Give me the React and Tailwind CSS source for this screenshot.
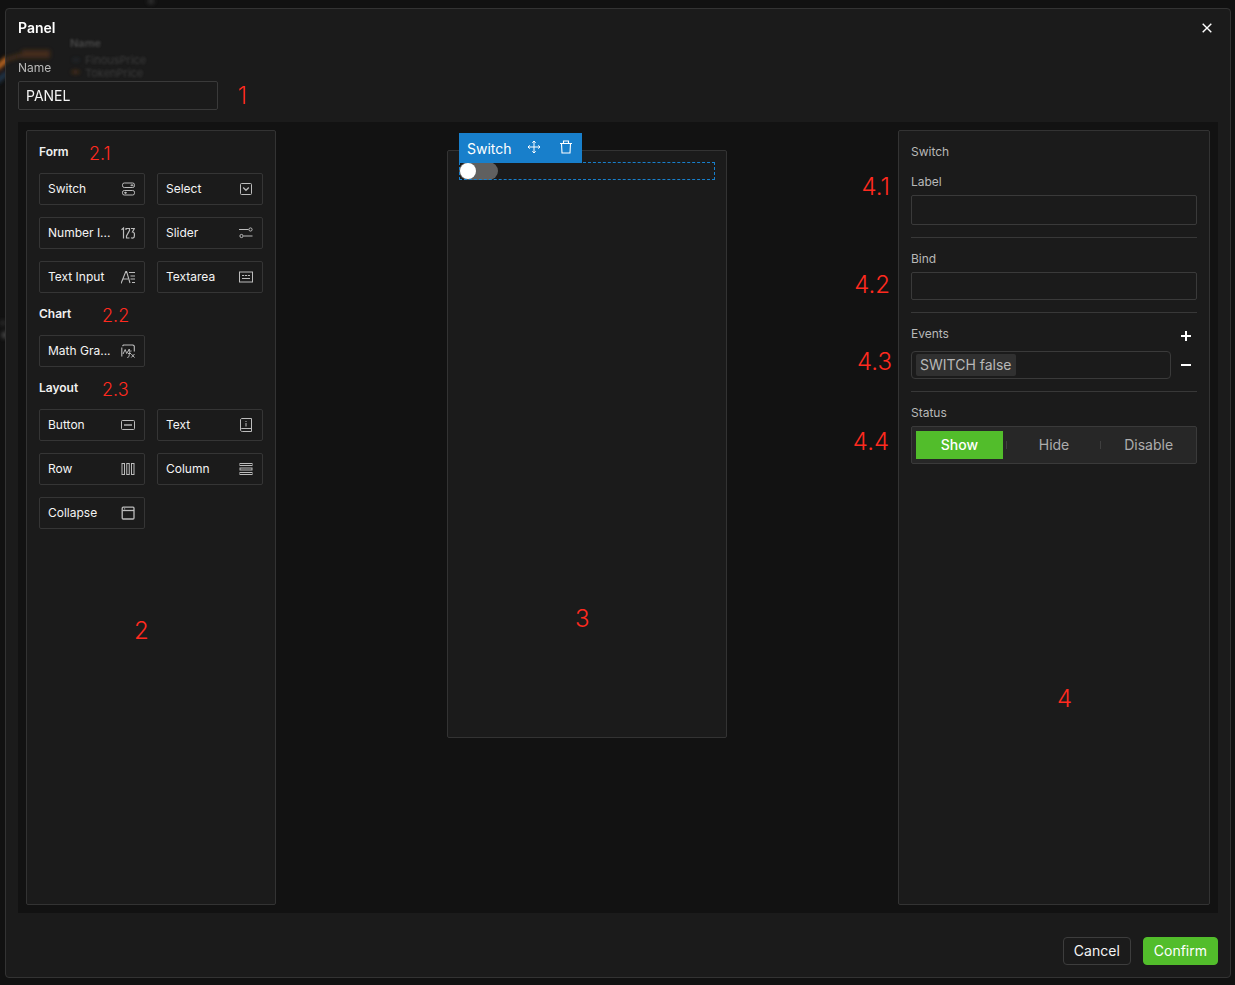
import { useState } from "react";

const stroke = {
  fill: "none",
  stroke: "currentColor",
  strokeWidth: 1,
};

function Icon({ children }) {
  return (
    <svg
      viewBox="0 0 14 14"
      className="h-3.5 w-3.5 shrink-0 text-[#bcbcbc]"
      aria-hidden="true"
      {...stroke}
    >
      {children}
    </svg>
  );
}

const icons = {
  switch: (
    <Icon>
      <rect x="1.500" y="1" width="12" height="4.500" rx="1.800" />
      <rect x="1.500" y="8.500" width="12" height="4.500" rx="1.800" />
      <path d="M9.500 3.250h3M11 2.250v2M3 10.750h3M4.500 9.750v2" />
    </Icon>
  ),
  select: (
    <Icon>
      <rect x="1.500" y="1.500" width="11" height="11" rx="1" />
      <path d="M4.200 5.500 7 8.300l2.800-2.800" strokeWidth="1.300" />
    </Icon>
  ),
  number: (
    <Icon>
      <path
        d="M.500 3.800 2.500 2v10.500M5 4V2.500h3.500v2L5.500 10v2h3M10 2.500h3.300L11.500 6c2.300 0 2 2.500 1.800 4.500 0 1.500-1.800 1.900-3.300 1.200"
        strokeWidth="1.200"
      />
    </Icon>
  ),
  slider: (
    <Icon>
      <path d="M0 3.500h9.500M4.500 10h9" />
      <circle cx="11.500" cy="3.500" r="1.600" />
      <circle cx="2.500" cy="10" r="1.600" />
    </Icon>
  ),
  textInput: (
    <Icon>
      <path d="M0 13.500 4.800 1.500h.8L9 13M2 9h5M8 2.500h6.500M9.500 6h4.500M9.500 9h4.500M11 12.500h3.500" strokeWidth="1.100" />
    </Icon>
  ),
  textarea: (
    <Icon>
      <rect x="0.500" y="2" width="13" height="10" />
      <path d="M3 5.500h2.200M6 5.500h2.200M9 5.500h2M3 8.500h8" />
    </Icon>
  ),
  math: (
    <Icon>
      <path d="M1.500 2 2.500 1h9.500l1.300 1v5.500M.8 3.500v9" strokeWidth="1.100" />
      <path d="M2 10 4.200 5.500l1.500 4L8.300 5v2.500M6.300 13.500c1.400 0 1.800-1 2-3l.5-2.500c.2-1 .9-1.500 1.700-1M7 9.500h3M10.300 10l3.200 3.500M13.500 10l-3.200 3.500" />
    </Icon>
  ),
  button: (
    <Icon>
      <rect x="0.500" y="2.500" width="13" height="9" rx="1" />
      <path d="M3 7h8" strokeWidth="1.400" />
    </Icon>
  ),
  text: (
    <Icon>
      <path d="M3 .500h9.500v13H3.300c-1 0-1.800-.600-1.800-1.500V2c0-.900.600-1.500 1.500-1.500ZM1.500 12c0-.900.600-1.500 1.500-1.500h9.500M7 5v3.500M7 3v1" />
    </Icon>
  ),
  row: (
    <Icon>
      <rect x="1" y="1.500" width="2.500" height="11" />
      <rect x="5.750" y="1.500" width="2.500" height="11" />
      <rect x="10.500" y="1.500" width="2.500" height="11" />
    </Icon>
  ),
  column: (
    <Icon>
      <rect x="1" y="1.500" width="12" height="2" />
      <rect x="1" y="6" width="12" height="2" />
      <rect x="1" y="10.500" width="12" height="2" />
    </Icon>
  ),
  collapse: (
    <Icon>
      <rect x="1.200" y="1.200" width="11.800" height="11.800" rx="1" strokeWidth="1.300" />
      <path d="M1.500 4.500H13" strokeWidth="1.300" />
      <path d="M3 2.900h1.200" />
    </Icon>
  ),
};

const groups = [
  {
    title: "Form",
    mark: "2.1",
    markClass: "left-[50px]",
    items: [
      ["Switch", "switch"],
      ["Select", "select"],
      ["Number I...", "number"],
      ["Slider", "slider"],
      ["Text Input", "textInput"],
      ["Textarea", "textarea"],
    ],
  },
  {
    title: "Chart",
    mark: "2.2",
    markClass: "left-[63px]",
    items: [["Math Gra...", "math"]],
  },
  {
    title: "Layout",
    mark: "2.3",
    markClass: "left-[63px]",
    items: [
      ["Button", "button"],
      ["Text", "text"],
      ["Row", "row"],
      ["Column", "column"],
      ["Collapse", "collapse"],
    ],
  },
];

function Mark({ className, children }) {
  return (
    <span
      className={`pointer-events-none absolute text-2xl leading-7 font-light text-[#ff2a1f] ${className}`}
    >
      {children}
    </span>
  );
}

function Palette() {
  return (
    <aside className="relative flex w-[250px] shrink-0 flex-col gap-3 rounded-xs border border-[#333] bg-[#1b1b1b] p-3">
      {groups.map((group) => (
        <section key={group.title} className="relative flex flex-col gap-3">
          <h2 className="text-xs leading-[18px] font-semibold text-[#f0f0f0]">{group.title}</h2>
          <span
            className={`pointer-events-none absolute top-0 text-lg leading-[22px] font-light text-[#ff2a1f] ${group.markClass}`}
          >
            {group.mark}
          </span>
          <div className="grid grid-cols-2 gap-3">
            {group.items.map(([label, icon]) => (
              <button
                key={label}
                type="button"
                className="flex h-8 min-w-0 items-center justify-between rounded-xs border border-[#353535] pr-[9px] pl-2 text-left text-xs whitespace-nowrap text-[#f4f4f4]"
              >
                <span>{label}</span>
                {icons[icon]}
              </button>
            ))}
          </div>
        </section>
      ))}
      <Mark className="top-[486px] left-[107px]">2</Mark>
    </aside>
  );
}

function Canvas() {
  const [on, setOn] = useState(false);
  return (
    <main className="flex min-w-0 flex-1 items-start justify-center pt-5">
      <div className="relative h-[588px] w-[280px] rounded-xs border border-[#333] bg-[#1b1b1b] p-[11px]">
        <div className="relative flex h-[18px]">
          <button
            type="button"
            role="switch"
            aria-checked={on}
            aria-label="Switch"
            onClick={() => setOn(!on)}
            className={`flex h-[18px] w-[39px] shrink-0 items-center rounded-full px-px ${on ? "justify-end bg-[#52bd2b]" : "justify-start bg-[#606060]"}`}
          >
            <span className="h-4 w-4 rounded-full bg-white" />
          </button>
          <div className="pointer-events-none absolute inset-0 border border-dashed border-[#187fcb]" />
          <div className="absolute bottom-[17px] left-0 flex h-[30px] items-center bg-[#187fcb] pr-[9px] pl-2 text-sm text-white">
            <span className="pt-0.5 pr-[15px]">Switch</span>
            <button type="button" aria-label="Move" className="mr-[18px] pb-0.5">
              <svg viewBox="0 0 14 14" className="h-3.5 w-3.5" aria-hidden="true" {...stroke}>
                <path d="M7 1v12M1 7h12M5.300 2.700 7 1l1.700 1.700M5.300 11.300 7 13l1.700-1.700M2.700 5.300 1 7l1.700 1.700M11.300 5.300 13 7l-1.700 1.700" />
              </svg>
            </button>
            <button type="button" aria-label="Delete" className="pb-0.5">
              <svg viewBox="0 0 14 14" className="h-3.5 w-3.5" aria-hidden="true" {...stroke}>
                <path d="M1 3.500h12M4.500 3.500V1h5v2.500M2.500 3.500l.500 9.500h8l.500-9.500" strokeWidth="1.100" />
              </svg>
            </button>
          </div>
        </div>
        <Mark className="top-[454px] left-[127px]">3</Mark>
      </div>
    </main>
  );
}

const field =
  "w-full rounded-xs border border-[#3a3a3a] bg-transparent px-[7px] text-sm text-[#f4f4f4] outline-none";

function Settings() {
  const [status, setStatus] = useState("Show");
  return (
    <aside className="relative w-[312px] shrink-0 rounded-xs border border-[#333] bg-[#1b1b1b] p-3 text-xs leading-[18px] text-[#b8b8b8]">
      <h2 className="mb-3">Switch</h2>
      <section className="relative flex flex-col gap-1 pb-3">
        <label htmlFor="label">Label</label>
        <input id="label" className={`${field} h-[30px]`} />
        <Mark className="top-0 right-full mr-[21px]">4.1</Mark>
      </section>
      <section className="relative flex flex-col gap-1 border-t border-[#383838] py-3">
        <label htmlFor="bind">Bind</label>
        <input id="bind" className={`${field} h-7`} />
        <Mark className="top-[33px] right-full mr-[21px]">4.2</Mark>
      </section>
      <section className="relative border-t border-[#383838] py-3">
        <div className="flex items-center justify-between">
          <h3>Events</h3>
          <button type="button" aria-label="Add event" className="mr-1 pt-1 text-white">
            <svg viewBox="0 0 14 14" className="h-3.5 w-3.5" fill="currentColor" aria-hidden="true">
              <path d="M2 6h10v2H2zM6 2h2v10H6z" />
            </svg>
          </button>
        </div>
        <div className="mt-2 flex items-center gap-2">
          <div className="flex h-7 flex-1 items-center rounded-sm border border-[#3a3a3a] px-1">
            <span className="rounded-xs bg-[#303030] px-1 text-sm leading-[22px]">SWITCH false</span>
          </div>
          <button type="button" aria-label="Remove event" className="mr-1 text-white">
            <svg viewBox="0 0 14 14" className="h-3.5 w-3.5" fill="currentColor" aria-hidden="true">
              <path d="M2 6h10v2H2z" />
            </svg>
          </button>
        </div>
        <Mark className="top-[35px] right-full mr-[19px]">4.3</Mark>
      </section>
      <section className="relative flex flex-col gap-1 border-t border-[#383838] pt-3">
        <h3>Status</h3>
        <div className="flex gap-2 rounded-xs border border-[#3a3a3a] bg-[#272727] p-1">
          {["Show", "Hide", "Disable"].map((name, i) => (
            <button
              key={name}
              type="button"
              aria-pressed={status === name}
              onClick={() => setStatus(name)}
              className={`relative h-7 flex-1 basis-0 text-sm ${status === name ? "bg-[#52bd2b] font-medium text-white" : "text-[#adadad]"}`}
            >
              {i > 0 && <span className="absolute top-2.5 -left-[5px] h-2 w-px bg-[#3f3f3f]" />}
              {name}
            </button>
          ))}
        </div>
        <Mark className="top-9 right-full mr-[22px]">4.4</Mark>
      </section>
      <Mark className="top-[554px] left-[158px]">4</Mark>
    </aside>
  );
}

function Backdrop() {
  return (
    <svg
      className="pointer-events-none absolute top-0 left-0 h-[400px] w-[180px]"
      viewBox="0 0 180 400"
      aria-hidden="true"
    >
      <defs>
        <filter id="soft" x="-50%" y="-50%" width="200%" height="200%">
          <feGaussianBlur stdDeviation="2" />
        </filter>
        <filter id="softText" x="-20%" y="-50%" width="140%" height="200%">
          <feGaussianBlur stdDeviation="1.300" />
        </filter>
        <clipPath id="outside">
          <path d="M0 0h5v400H0z" />
        </clipPath>
      </defs>
      <g filter="url(#soft)">
        <path d="M0 65 8 59 22 55" stroke="#a8581c" strokeWidth="4" fill="none" opacity=".3" />
        <path d="M22 54h28" stroke="#a8581c" strokeWidth="8" opacity=".3" />
        <path d="M73 60h6" stroke="#35506c" strokeWidth="2" opacity=".4" />
        <path d="M72 72h7" stroke="#a8581c" strokeWidth="2" opacity=".6" />
        <path d="M148 1h6" stroke="#777" strokeWidth="6" opacity=".3" />
      </g>
      <g filter="url(#softText)" fill="#8a8a8a" fontSize="11">
        <text x="70" y="47" opacity=".4" fontWeight="600">
          Name
        </text>
        <text x="85" y="64" opacity=".28">
          FinousPrice
        </text>
        <text x="85" y="77" opacity=".28">
          TokenPrice
        </text>
      </g>
      <g clipPath="url(#outside)">
        <g filter="url(#soft)">
          <path d="M-4 69 8 58" stroke="#c86c24" strokeWidth="5" />
          <path d="M-4 82 8 72" stroke="#24384e" strokeWidth="5" />
          <path d="M0 323h6" stroke="#777" strokeWidth="5" opacity=".25" />
          <path d="M2 335h6" stroke="#888" strokeWidth="6" opacity=".5" />
        </g>
      </g>
    </svg>
  );
}

export default function App() {
  return (
    <div className="flex min-h-screen bg-[#111] pt-2 pr-1 pb-[7px] pl-[5px] font-['Inter','Liberation_Sans',sans-serif] text-sm text-[#f4f4f4]">
      <div
        role="dialog"
        aria-labelledby="title"
        className="flex min-w-0 flex-1 flex-col rounded-sm border border-[#333] bg-[#1b1b1b] px-3 pt-2 pb-3"
      >
        <Backdrop />
        <header className="relative flex items-center justify-between">
          <h1 id="title" className="text-sm leading-[22px] font-semibold text-white">
            Panel
          </h1>
          <button type="button" aria-label="Close" className="mr-1 text-white">
            <svg viewBox="0 0 14 14" className="h-3.5 w-3.5" aria-hidden="true" {...stroke} strokeWidth="1.400">
              <path d="m2.700 2.700 8.600 8.600M11.300 2.700l-8.600 8.600" />
            </svg>
          </button>
        </header>
        <div className="relative mt-[19px] flex w-[200px] flex-col gap-[3px]">
          <label htmlFor="name" className="text-xs leading-5 text-[#b8b8b8]">
            Name
          </label>
          <input id="name" defaultValue="PANEL" className={`${field} h-[29px]`} />
          <Mark className="top-6 left-[220px]">1</Mark>
        </div>
        <div className="relative mt-3 flex flex-1 bg-[#121212] p-2">
          <Palette />
          <Canvas />
          <Settings />
        </div>
        <footer className="mt-6 flex justify-end gap-3">
          <button type="button" className="h-7 rounded-sm border border-[#3d3d3d] px-2.5 text-sm">
            Cancel
          </button>
          <button
            type="button"
            className="h-7 rounded-sm border border-[#52bd2b] bg-[#52bd2b] px-2.5 text-sm text-white"
          >
            Confirm
          </button>
        </footer>
      </div>
    </div>
  );
}
